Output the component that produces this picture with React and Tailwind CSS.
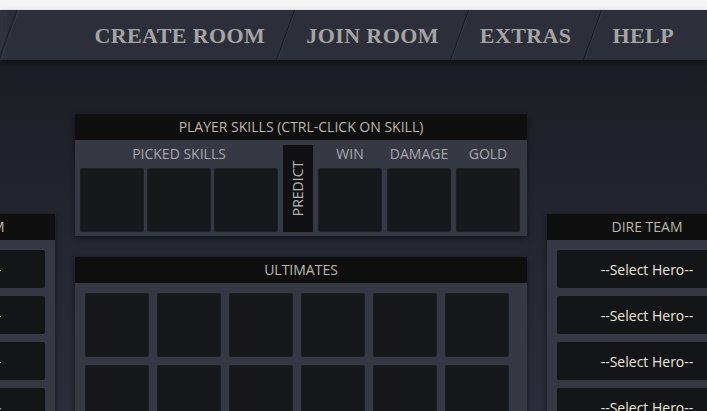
const navItems = ['CREATE ROOM', 'JOIN ROOM', 'EXTRAS', 'HELP'];

const Slot = ({ className = '' }) => (
  <div className={`rounded-[3px] bg-[#17181b] shadow-[inset_0_0_0_1px_#1e1f23] ${className}`}></div>
);

const PanelHeader = ({ children }) => (
  <div className="flex h-[26px] items-center justify-center bg-[#0f0f10] pb-[1px] text-[14px] text-[#bdb6ad]">
    {children}
  </div>
);

const TeamPanel = ({ title }) => (
  <div className="w-[200px] shrink-0 pt-[100px]">
    <div className="shadow-[0_2px_6px_rgba(0,0,0,0.45)]">
      <PanelHeader>{title}</PanelHeader>
      <div className="flex flex-col gap-2 bg-[#363843] px-[10px] pt-[10px] pb-[10px]">
        {[0, 1, 2, 3, 4].map((i) => (
          <div
            key={i}
            className="flex h-[38px] items-center justify-center rounded-[2px] bg-[#141517] text-[14px] text-[#ece6df]"
          >
            --Select Hero--
          </div>
        ))}
      </div>
    </div>
  </div>
);

export default function App() {
  return (
    <div
      className="h-[411px] w-[707px] overflow-hidden bg-[#f5f5f5] pt-[10px]"
      style={{ fontFamily: '"Open Sans", "Noto Sans", sans-serif' }}
    >
      <nav className="relative z-10 flex h-[50px] items-center overflow-hidden bg-[#2c2e39] shadow-[0_3px_6px_rgba(0,0,0,0.45)]">
        <div className="h-full w-[7px] bg-[#30323e]"></div>
        <span className="h-[60px] w-[2px] -skew-x-20 bg-[#23242c] shadow-[1px_0_0_#3a3c48]"></span>
        <div className="flex-1"></div>
        {navItems.map((item, i) => (
          <div key={item} className="flex h-full items-center">
            {i > 0 && (
              <span className="mx-[20px] h-[60px] w-[1px] -skew-x-20 bg-[#1d1e25] shadow-[1px_0_0_#383a46]"></span>
            )}
            <span
              className="text-[22px] font-bold tracking-[0.4px] text-[#a5a5a5]"
              style={{ fontFamily: '"Liberation Serif", "DejaVu Serif", serif' }}
            >
              {item}
            </span>
          </div>
        ))}
        <div className="w-[33px]"></div>
      </nav>

      <main className="h-[351px] bg-gradient-to-b from-[#1c1d24] via-[#242631] to-[#2b2e3a]">
        <div className="ml-[-145px] flex gap-5 pt-[54px]">
          <TeamPanel title="RADIANT TEAM" />

          <div className="w-[452px] shrink-0">
            <div className="shadow-[0_2px_6px_rgba(0,0,0,0.45)]">
              <PanelHeader>PLAYER SKILLS (CTRL-CLICK ON SKILL)</PanelHeader>
              <div className="flex bg-[#363843] pl-[5px] pr-[7px] pb-[4px] pt-[5px]">
                <div className="flex flex-col">
                  <div className="flex h-[23px] justify-center text-[14px] leading-[18px] text-[#a9a9ab]">PICKED SKILLS</div>
                  <div className="flex gap-[3px]">
                    <Slot className="h-[64px] w-[64px]" />
                    <Slot className="h-[64px] w-[64px]" />
                    <Slot className="h-[64px] w-[64px]" />
                  </div>
                </div>
                <div className="ml-[5px] mr-[5px] flex h-[87px] w-[30px] items-center justify-center bg-[#111113]">
                  <span className="-rotate-90 whitespace-nowrap text-[14px] text-[#b3b3b5]">PREDICT</span>
                </div>
                <div className="flex flex-col">
                  <div className="flex h-[23px] gap-[5px] text-[14px] leading-[18px] text-[#a9a9ab]">
                    <div className="flex w-[64px] justify-center">WIN</div>
                    <div className="flex w-[64px] justify-center">DAMAGE</div>
                    <div className="flex w-[64px] justify-center">GOLD</div>
                  </div>
                  <div className="flex gap-[5px]">
                    <Slot className="h-[64px] w-[64px]" />
                    <Slot className="h-[64px] w-[64px]" />
                    <Slot className="h-[64px] w-[64px]" />
                  </div>
                </div>
              </div>
            </div>

            <div className="mt-[21px] shadow-[0_2px_6px_rgba(0,0,0,0.45)]">
              <PanelHeader>ULTIMATES</PanelHeader>
              <div className="grid grid-cols-[repeat(6,64px)] gap-2 bg-[#363843] pl-[10px] pt-[10px] pb-[10px]">
                {Array.from({ length: 18 }).map((_, i) => (
                  <Slot key={i} className="h-[64px] w-[64px]" />
                ))}
              </div>
            </div>
          </div>

          <TeamPanel title="DIRE TEAM" />
        </div>
      </main>
    </div>
  );
}
